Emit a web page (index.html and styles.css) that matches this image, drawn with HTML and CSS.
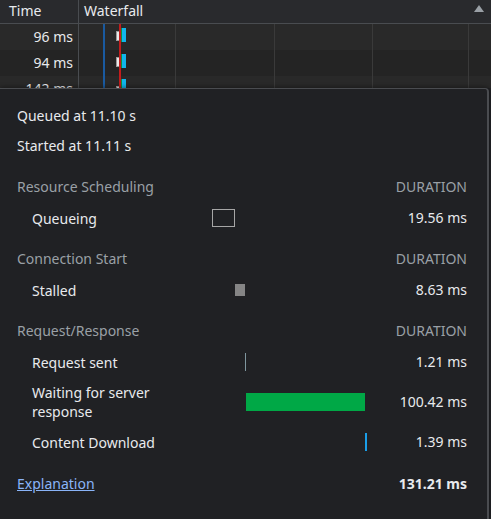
FILE: index.html
```html
<!DOCTYPE html>
<html lang="en">
<head>
    <meta charset="UTF-8">
    <title>Network - Timing</title>
    <link rel="stylesheet" href="styles.css">
</head>
<body>
    <!-- Request table behind the popover -->
    <div class="table">
        <div class="table-head">
            <div class="col-time">Time</div>
            <div class="col-waterfall">Waterfall <span class="sort-arrow"></span></div>
        </div>
        <div class="table-body">
            <div class="row">
                <div class="col-time">96 ms</div>
                <div class="col-waterfall"><span class="wf-wait"></span><span class="wf-recv"></span></div>
            </div>
            <div class="row alt">
                <div class="col-time">94 ms</div>
                <div class="col-waterfall"><span class="wf-wait"></span><span class="wf-recv"></span></div>
            </div>
            <div class="row">
                <div class="col-time">142 ms</div>
                <div class="col-waterfall"><span class="wf-wait low"></span><span class="wf-recv up"></span></div>
            </div>
            <div class="marker marker-dom"></div>
            <div class="marker marker-load"></div>
        </div>
    </div>

    <!-- Timing popover -->
    <div class="popover">
        <div class="info-row">Queued at 11.10 s</div>
        <div class="info-row">Started at 11.11 s</div>

        <div class="section">
            <div class="section-head">
                <span>Resource Scheduling</span>
                <span class="dur-label">DURATION</span>
            </div>
            <div class="timing-row">
                <span class="label">Queueing</span>
                <span class="track"><span class="bar bar-queue" style="left: 0%; width: 14.9%"></span></span>
                <span class="value">19.56 ms</span>
            </div>
        </div>

        <div class="section">
            <div class="section-head">
                <span>Connection Start</span>
                <span class="dur-label">DURATION</span>
            </div>
            <div class="timing-row">
                <span class="label">Stalled</span>
                <span class="track"><span class="bar bar-stalled" style="left: 14.9%; width: 6.6%"></span></span>
                <span class="value">8.63 ms</span>
            </div>
        </div>

        <div class="section">
            <div class="section-head">
                <span>Request/Response</span>
                <span class="dur-label">DURATION</span>
            </div>
            <div class="timing-row">
                <span class="label">Request sent</span>
                <span class="track"><span class="bar bar-sent" style="left: 21.3%; width: 1px"></span></span>
                <span class="value">1.21 ms</span>
            </div>
            <div class="timing-row">
                <span class="label">Waiting for server response</span>
                <span class="track"><span class="bar bar-waiting" style="left: 22.2%; width: 76.6%"></span></span>
                <span class="value">100.42 ms</span>
            </div>
            <div class="timing-row">
                <span class="label">Content Download</span>
                <span class="track"><span class="bar bar-download" style="left: 98.7%; width: 2px"></span></span>
                <span class="value">1.39 ms</span>
            </div>
        </div>

        <div class="footer">
            <a href="#" class="link">Explanation</a>
            <span class="total">131.21 ms</span>
        </div>
    </div>
</body>
</html>
```

FILE: styles.css
```css
body {
    margin: 0;
    background-color: #202124;
    color: #e8eaed;
    font-family: 'Noto Sans', 'Open Sans', sans-serif;
    font-size: 14px;
    overflow: hidden;
}

/* table */

.table {
    height: 88px;
    overflow: hidden;
    background-color: #242424;
}

.table-head {
    display: flex;
    height: 23px;
    line-height: 21px;
    background-color: #292a2d;
    border-bottom: 1px solid #494c50;
}

.table-head .col-time {
    text-align: left;
    padding-left: 9px;
}

.col-time {
    width: 79px;
    box-sizing: border-box;
    padding-right: 5px;
    padding-left: 4px;
    text-align: right;
    border-right: 1px solid #494c50;
    flex-shrink: 0;
}

.col-waterfall {
    flex: 1;
    position: relative;
    padding-left: 5px;
}

.sort-arrow {
    position: absolute;
    right: 7px;
    top: 5px;
    width: 0;
    height: 0;
    border-left: 5px solid transparent;
    border-right: 5px solid transparent;
    border-bottom: 7px solid #9aa0a6;
}

.table-body {
    position: relative;
}

.row {
    display: flex;
    height: 26px;
    line-height: 26px;
    background-color: #292929;
}

.row.alt {
    background-color: #242424;
}

.row .col-waterfall {
    background-image:
        linear-gradient(#3a3a3a, #3a3a3a),
        linear-gradient(#3a3a3a, #3a3a3a),
        linear-gradient(#3a3a3a, #3a3a3a),
        linear-gradient(#3a3a3a, #3a3a3a);
    background-size: 1px 100%;
    background-repeat: no-repeat;
    background-position: 96px 0, 195px 0, 293px 0, 389px 0;
}

.wf-wait {
    position: absolute;
    left: 37px;
    top: 7px;
    width: 3px;
    height: 8px;
    background-color: #e8e8e8;
    border: 1px solid #9a9a9a;
    border-right: none;
}

.wf-wait.low {
    top: 10px;
}

.wf-recv {
    position: absolute;
    left: 42px;
    top: 4px;
    width: 4px;
    height: 14px;
    background-color: #10b5ec;
    border-left: 1px solid #138a3e;
}

.wf-recv.up {
    top: 3px;
}

.marker {
    position: absolute;
    top: 0;
    bottom: 0;
}

.marker-dom {
    left: 103px;
    width: 2px;
    background-color: #1a5aa0;
}

.marker-load {
    left: 119px;
    width: 2px;
    background-color: #c21c1c;
}

/* popover */

.popover {
    position: relative;
    width: 489px;
    box-sizing: border-box;
    padding: 12px 20px 0 17px;
    background-color: #202124;
    border-top: 1px solid #4a4c50;
    border-right: 2px solid #4a4c50;
    border-top-right-radius: 4px;
    box-shadow: 0 -1px 4px rgba(0, 0, 0, 0.4);
    height: 431px;
}

.info-row {
    height: 30px;
    line-height: 30px;
}

.section {
    margin-top: 11px;
}

.section-head {
    display: flex;
    justify-content: space-between;
    height: 30px;
    line-height: 30px;
    color: #9aa0a6;
}

.timing-row {
    display: grid;
    grid-template-columns: 195px 155px 1fr;
    align-items: center;
    padding: 6px 0 5px;
    line-height: 20px;
}

.timing-row .label {
    padding-left: 15px;
    padding-right: 50px;
    line-height: 19px;
}

.timing-row .value {
    text-align: right;
}

.track {
    position: relative;
    height: 18px;
}

.bar {
    position: absolute;
    top: 0;
    bottom: 0;
}

.bar-queue {
    box-sizing: border-box;
    border: 1px solid #a6a6a6;
}

.bar-stalled {
    top: 3px;
    bottom: 3px;
    background-color: #858585;
}

.bar-sent {
    background-color: #7f969e;
}

.bar-waiting {
    background-color: #00a846;
}

.bar-download {
    background-color: #1a9ee8;
}

.footer {
    display: flex;
    justify-content: space-between;
    margin-top: 12px;
    height: 30px;
    line-height: 30px;
}

.link {
    color: #8ab4f8;
}

.total {
    font-weight: bold;
}
```
